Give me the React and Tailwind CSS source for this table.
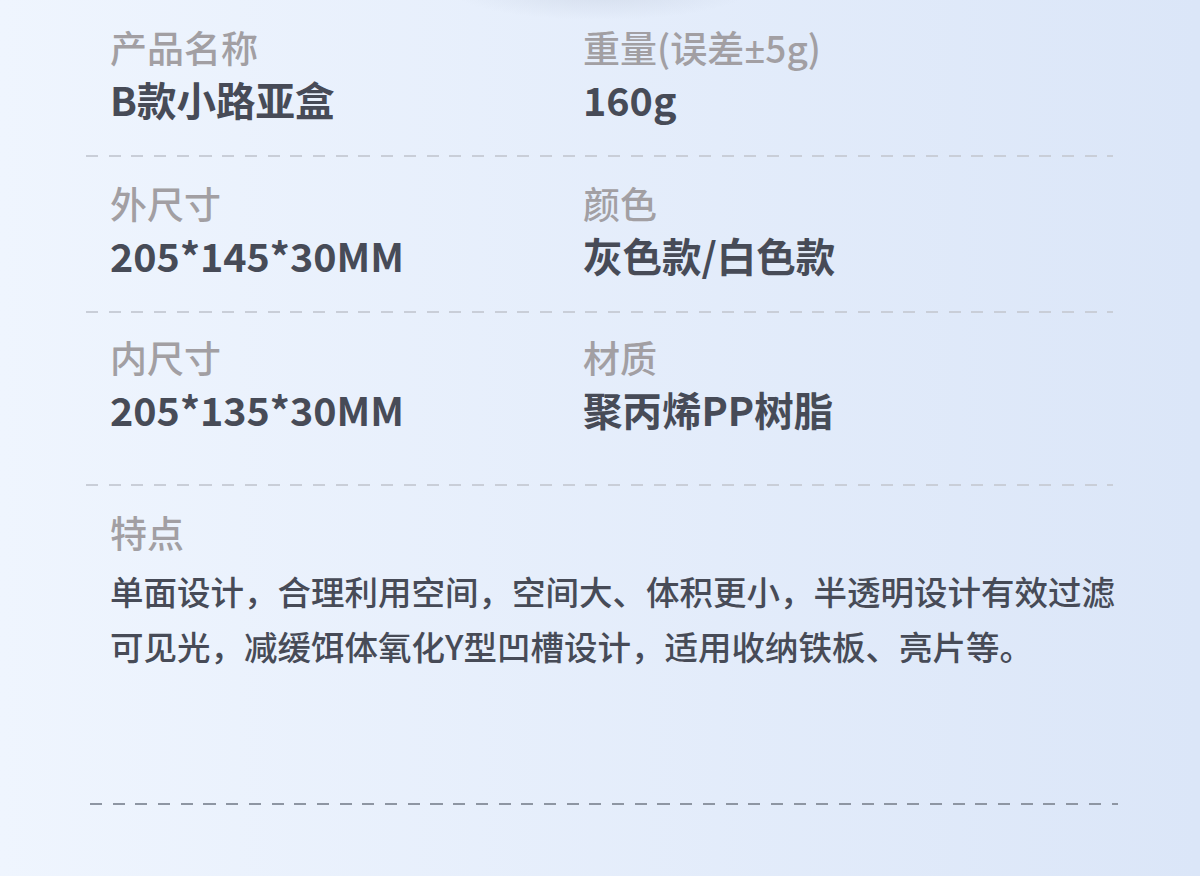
import React from 'react';

const specs = [
  {
    left: { label: '产品名称', value: 'B款小路亚盒' },
    right: {
      label: (
        <>
          重量(误差<span style={{ fontFamily: '"Noto Sans", sans-serif' }}>±</span>5g)
        </>
      ),
      value: '160g',
    },
    pt: 'pt-[22px]',
    pb: 'pb-[29px]',
  },
  {
    left: { label: '外尺寸', value: '205*145*30MM' },
    right: { label: '颜色', value: '灰色款/白色款' },
    pt: 'pt-[21px]',
    pb: 'pb-[29px]',
  },
  {
    left: { label: '内尺寸', value: '205*135*30MM' },
    right: { label: '材质', value: '聚丙烯PP树脂' },
    pt: 'pt-[19px]',
    pb: 'pb-[48px]',
  },
];

const Dash = ({ tone }) => (
  <div
    className={`h-[2px] ${
      tone === 'dark'
        ? 'ml-[90px] w-[1028px] bg-[repeating-linear-gradient(90deg,#8e96a3_0_12px,transparent_12px_22.7px)]'
        : 'ml-[86px] w-[1027px] bg-[repeating-linear-gradient(90deg,#c9ced8_0_12px,transparent_12px_22.7px)]'
    }`}
  />
);

const Field = ({ label, value }) => (
  <div>
    <div className="h-[50px] text-[37px] leading-[50px] font-medium text-[#a29fa3]">{label}</div>
    <div className="text-[39.5px] leading-[54px] font-bold text-[#474b57]">{value}</div>
  </div>
);

export default function App() {
  return (
    <div
      className="relative w-[1200px] h-[876px] overflow-hidden bg-gradient-to-r from-[#eff5fe] to-[#dbe6f8]"
      style={{ fontFamily: '"Noto Sans CJK SC", "Noto Sans", sans-serif' }}
    >
      {/* faint shadow at top */}
      <div className="absolute left-[450px] -top-[40px] w-[300px] h-[60px] rounded-full bg-[radial-gradient(closest-side,rgba(160,170,190,0.25),transparent)]" />

      <div className="relative">
        {specs.map((row, i) => (
          <div key={i}>
            <div className={`grid grid-cols-[473px_1fr] pl-[110px] ${row.pt} ${row.pb}`}>
              <Field {...row.left} />
              <Field {...row.right} />
            </div>
            <Dash />
          </div>
        ))}

        <div className="pl-[110px] pr-[80px] pt-[21px] pb-[130px]">
          <div className="h-[50px] text-[37px] leading-[50px] font-medium text-[#a29fa3]">特点</div>
          <p className="mt-[6px] text-[33.5px] leading-[55px] font-medium text-[#474b57] w-[1010px]">
            单面设计，合理利用空间，空间大、体积更小，半透明设计有效过滤可见光，减缓饵体氧化Y型凹槽设计，适用收纳铁板、亮片等。
          </p>
        </div>
        <Dash tone="dark" />
      </div>
    </div>
  );
}
